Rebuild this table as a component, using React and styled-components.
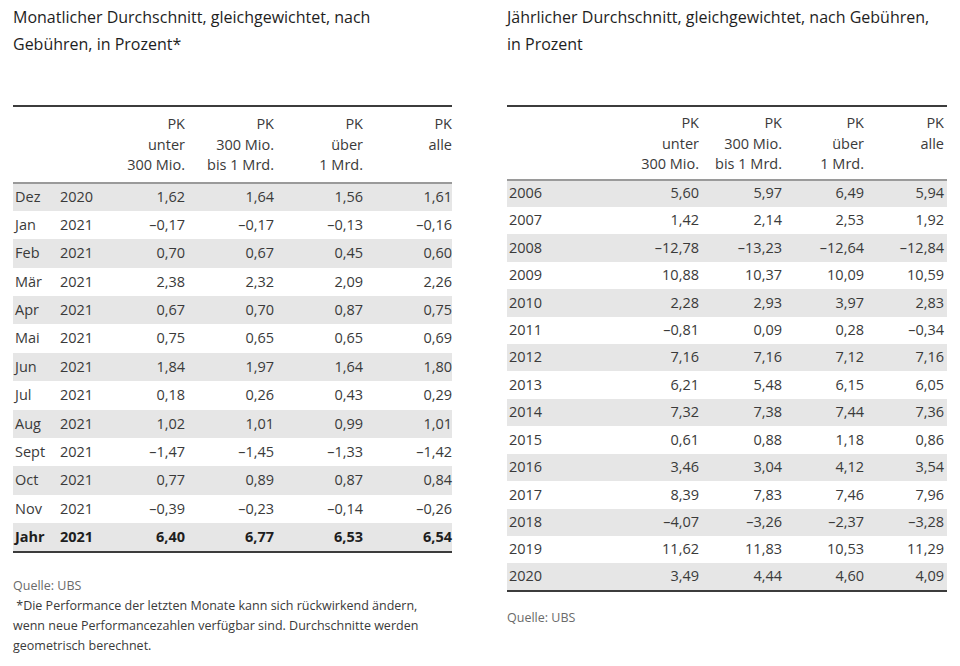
import React from 'react';
import styled, { createGlobalStyle } from 'styled-components';

const GlobalStyle = createGlobalStyle`
  html, body {
    margin: 0;
    padding: 0;
    background: #ffffff;
  }
  body {
    font-family: "Open Sans", "Noto Sans", "Liberation Sans", sans-serif;
    color: #333333;
  }
`;

const monthly = [
  ['Dez', '2020', '1,62', '1,64', '1,56', '1,61'],
  ['Jan', '2021', '–0,17', '–0,17', '–0,13', '–0,16'],
  ['Feb', '2021', '0,70', '0,67', '0,45', '0,60'],
  ['Mär', '2021', '2,38', '2,32', '2,09', '2,26'],
  ['Apr', '2021', '0,67', '0,70', '0,87', '0,75'],
  ['Mai', '2021', '0,75', '0,65', '0,65', '0,69'],
  ['Jun', '2021', '1,84', '1,97', '1,64', '1,80'],
  ['Jul', '2021', '0,18', '0,26', '0,43', '0,29'],
  ['Aug', '2021', '1,02', '1,01', '0,99', '1,01'],
  ['Sept', '2021', '–1,47', '–1,45', '–1,33', '–1,42'],
  ['Oct', '2021', '0,77', '0,89', '0,87', '0,84'],
  ['Nov', '2021', '–0,39', '–0,23', '–0,14', '–0,26'],
];

const yearly = [
  ['2006', '5,60', '5,97', '6,49', '5,94'],
  ['2007', '1,42', '2,14', '2,53', '1,92'],
  ['2008', '–12,78', '–13,23', '–12,64', '–12,84'],
  ['2009', '10,88', '10,37', '10,09', '10,59'],
  ['2010', '2,28', '2,93', '3,97', '2,83'],
  ['2011', '–0,81', '0,09', '0,28', '–0,34'],
  ['2012', '7,16', '7,16', '7,12', '7,16'],
  ['2013', '6,21', '5,48', '6,15', '6,05'],
  ['2014', '7,32', '7,38', '7,44', '7,36'],
  ['2015', '0,61', '0,88', '1,18', '0,86'],
  ['2016', '3,46', '3,04', '4,12', '3,54'],
  ['2017', '8,39', '7,83', '7,46', '7,96'],
  ['2018', '–4,07', '–3,26', '–2,37', '–3,28'],
  ['2019', '11,62', '11,83', '10,53', '11,29'],
  ['2020', '3,49', '4,44', '4,60', '4,09'],
];

const headers = [
  ['PK', 'unter', '300 Mio.'],
  ['PK', '300 Mio.', 'bis 1 Mrd.'],
  ['PK', 'über', '1 Mrd.'],
  ['PK', 'alle'],
];

const App = () => {
  return (
    <>
      <GlobalStyle />
      <Page>
        <Panel $width={439}>
          <Title>
            Monatlicher Durchschnitt, gleichgewichtet, nach
            <br />
            Gebühren, in Prozent*
          </Title>
          <DataTable $rowHeight={28.4}>
            <colgroup>
              <col style={{ width: 47 }} />
              <col style={{ width: 50 }} />
              <col style={{ width: 75 }} />
              <col style={{ width: 89 }} />
              <col style={{ width: 89 }} />
              <col style={{ width: 89 }} />
            </colgroup>
            <thead>
              <tr>
                <HeadCell />
                <HeadCell />
                {headers.map((h, i) => (
                  <HeadCell key={i} $num>
                    {h.map((line, j) => (
                      <HeadLine key={j}>{line}</HeadLine>
                    ))}
                  </HeadCell>
                ))}
              </tr>
            </thead>
            <tbody>
              {monthly.map((row, i) => (
                <Row key={i} $shaded={i % 2 === 0}>
                  <Cell>{row[0]}</Cell>
                  <Cell $year>{row[1]}</Cell>
                  {row.slice(2).map((v, j) => (
                    <Cell key={j} $num>{v}</Cell>
                  ))}
                </Row>
              ))}
              <Row $shaded $bold>
                <Cell>Jahr</Cell>
                <Cell $year>2021</Cell>
                <Cell $num>6,40</Cell>
                <Cell $num>6,77</Cell>
                <Cell $num>6,53</Cell>
                <Cell $num>6,54</Cell>
              </Row>
            </tbody>
          </DataTable>
          <Notes $top={23}>
            <Source>Quelle: UBS</Source>
            <Footnote>
              &nbsp;*Die Performance der letzten Monate kann sich rückwirkend ändern,
              wenn neue Performancezahlen verfügbar sind. Durchschnitte werden
              geometrisch berechnet.
            </Footnote>
          </Notes>
        </Panel>

        <Panel $width={440}>
          <Title>
            Jährlicher Durchschnitt, gleichgewichtet, nach Gebühren,
            <br />
            in Prozent
          </Title>
          <DataTable $rowHeight={27.43}>
            <colgroup>
              <col style={{ width: 110 }} />
              <col style={{ width: 82 }} />
              <col style={{ width: 83 }} />
              <col style={{ width: 82 }} />
              <col style={{ width: 83 }} />
            </colgroup>
            <thead>
              <tr>
                <HeadCell $compact />
                {headers.map((h, i) => (
                  <HeadCell key={i} $num $compact $padRight={i === 3 ? 3 : 0}>
                    {h.map((line, j) => (
                      <HeadLine key={j}>{line}</HeadLine>
                    ))}
                  </HeadCell>
                ))}
              </tr>
            </thead>
            <tbody>
              {yearly.map((row, i) => (
                <Row key={i} $shaded={i % 2 === 0}>
                  <Cell>{row[0]}</Cell>
                  {row.slice(1).map((v, j) => (
                    <Cell key={j} $num $padRight={j === 3 ? 3 : 0}>{v}</Cell>
                  ))}
                </Row>
              ))}
            </tbody>
          </DataTable>
          <Notes $top={16}>
            <Source>Quelle: UBS</Source>
          </Notes>
        </Panel>
      </Page>
    </>
  );
};

const Page = styled.div`
  display: flex;
  align-items: flex-start;
  gap: 55px;
  padding: 4px 0 0 13px;
  width: 960px;
  height: 666px;
  box-sizing: border-box;
  overflow: hidden;
`;

const Panel = styled.section`
  width: ${(p) => p.$width}px;
  flex-shrink: 0;
  display: flex;
  flex-direction: column;
`;

const Title = styled.h2`
  margin: 0 0 47px;
  font-size: 16px;
  font-weight: 400;
  line-height: 27px;
  color: #1e1e1e;
  white-space: nowrap;
`;

const DataTable = styled.table`
  width: 100%;
  table-layout: fixed;
  border-collapse: collapse;
  border-top: 2px solid #3c3c3c;
  border-bottom: 2px solid #3c3c3c;
  font-size: 14.5px;

  tbody tr {
    height: ${(p) => p.$rowHeight}px;
  }
`;

const HeadCell = styled.th`
  font-weight: 400;
  text-align: ${(p) => (p.$num ? 'right' : 'left')};
  vertical-align: top;
  padding: ${(p) => (p.$compact ? '6px' : '7px')} ${(p) => p.$padRight || 0}px
    ${(p) => (p.$compact ? '4px' : '6px')} 0;
  border-bottom: 2px solid #9a9a9a;
  color: #3a3a3a;
`;

const HeadLine = styled.div`
  line-height: 20.5px;
  white-space: nowrap;
`;

const Row = styled.tr`
  background: ${(p) => (p.$shaded ? '#e6e6e6' : '#ffffff')};
  font-weight: ${(p) => (p.$bold ? 700 : 400)};
  color: ${(p) => (p.$bold ? '#1e1e1e' : '#3a3a3a')};
`;

const Cell = styled.td`
  padding: 0 ${(p) => p.$padRight || 0}px 0 ${(p) => (p.$num ? 0 : p.$year ? 0 : 2)}px;
  text-align: ${(p) => (p.$num ? 'right' : 'left')};
  white-space: nowrap;
  line-height: 1;
`;

const Notes = styled.div`
  margin-top: ${(p) => p.$top}px;
  font-size: 12.5px;
  line-height: 20px;
  color: #555555;
`;

const Source = styled.div`
  color: #6a6a6a;
`;

const Footnote = styled.p`
  margin: 0;
  color: #3a3a3a;
`;

export default App;
